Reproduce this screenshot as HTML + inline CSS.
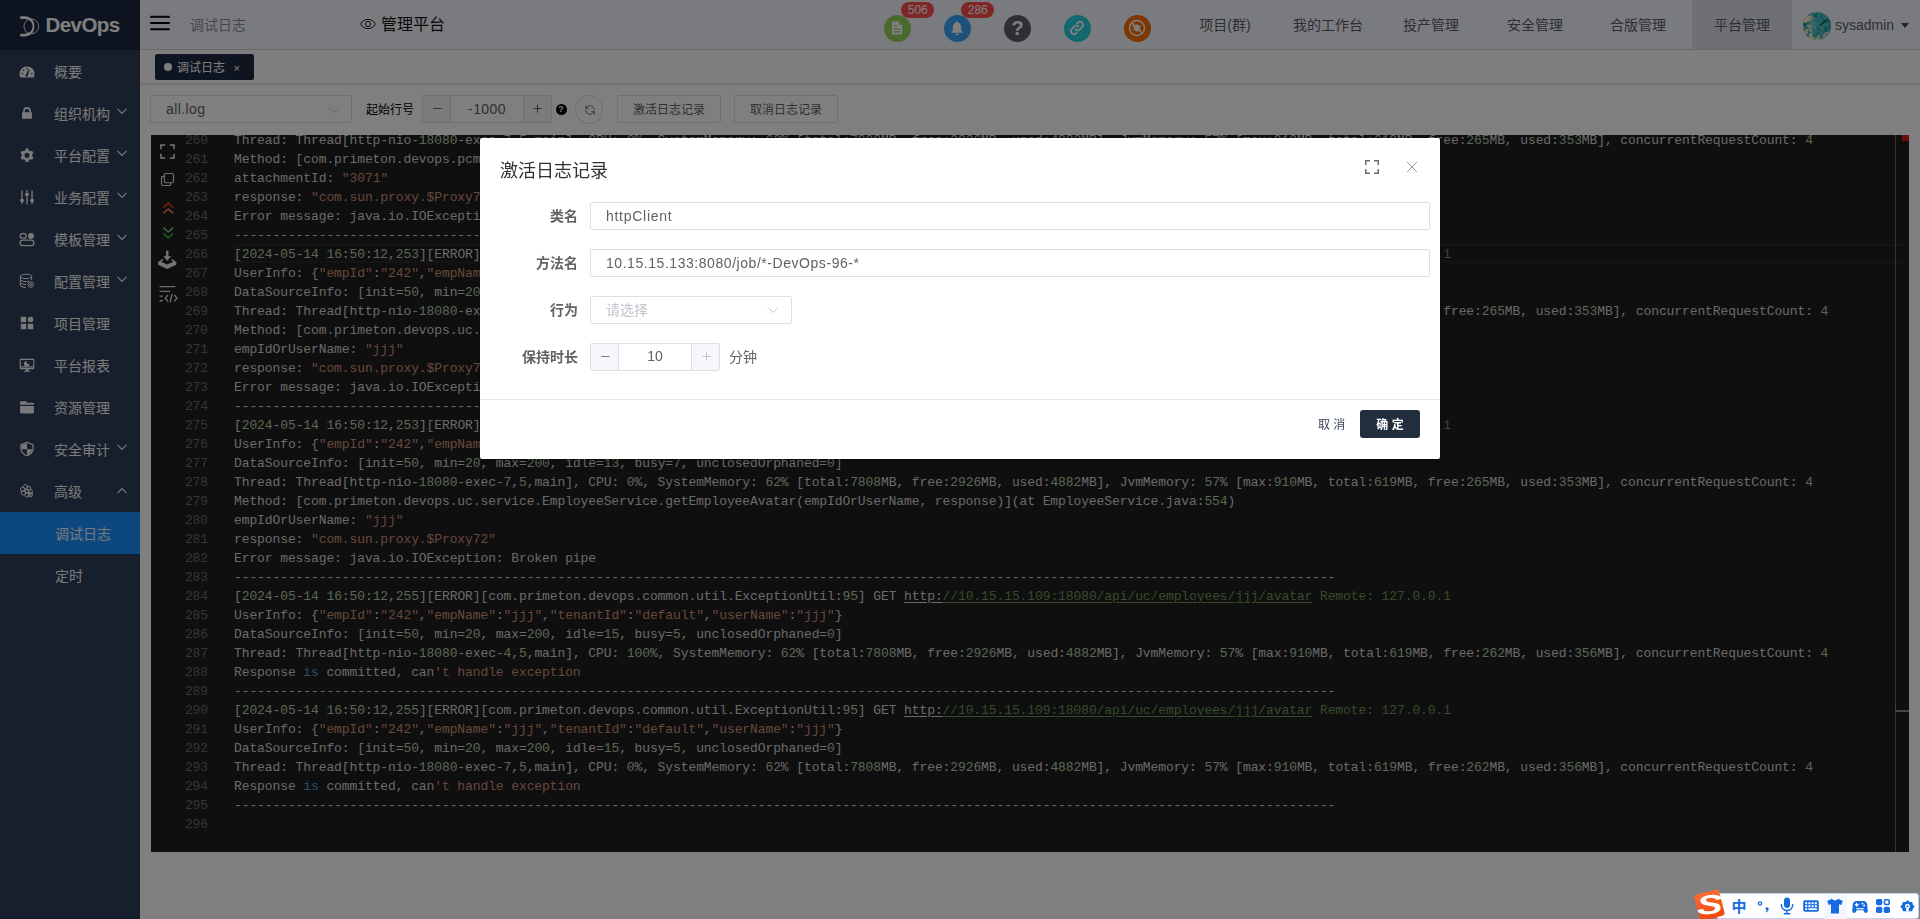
<!DOCTYPE html>
<html lang="zh-CN">
<head>
<meta charset="utf-8">
<title>DevOps - 调试日志</title>
<style>
*{box-sizing:border-box;margin:0;padding:0}
html,body{width:1920px;height:919px;overflow:hidden;background:#fff}
body{font-family:"Liberation Sans","Noto Sans CJK SC",sans-serif;font-size:14px;color:#303133;-webkit-font-smoothing:antialiased}
i{font-style:normal}
ul{list-style:none}
button{font-family:inherit;padding:0;margin:0;white-space:nowrap}
h3{font-weight:normal;margin:0}
a{color:inherit;text-decoration:none}
#app{position:relative;width:1920px;height:919px;overflow:hidden;background:#fff}
.abs{position:absolute}
/* sidebar */
#side{position:absolute;left:0;top:0;width:140px;height:919px;background:#303f58}
#logo{position:absolute;left:0;top:0;width:140px;height:50px;background:#1d293f}
#logo .t{position:absolute;left:45.500px;top:0;line-height:50px;font-size:20.500px;font-weight:bold;color:#fff;letter-spacing:-0.550px}
.mi{position:absolute;left:0;width:140px;height:42px;line-height:42px;color:#f4f4f5;font-size:14px}
.mi .tt{position:absolute;left:54px;top:1px}
.mi svg.ic{position:absolute;left:19px;top:13px;width:16px;height:16px}
.mi svg.ar{position:absolute;left:116px;top:13px;width:12px;height:12px}
.mi.sub .tt{left:55px}
.mi.act{background:#1890ff}
/* header */
#hd{position:absolute;left:140px;top:0;width:1780px;height:50px;background:#f5f7fe;border-bottom:1px solid #dddde0}
.nav{position:absolute;top:0;height:49px;line-height:51px;width:100px;text-align:center;font-size:14px;color:#5a5e66}
.nav.on{background:#dfe1e8}
.cir{position:absolute;top:15px;width:27px;height:27px;border-radius:50%}
.cir svg{position:absolute;left:-1px;top:-1px;width:28px;height:28px}
.bdg{position:absolute;top:2px;width:33px;height:16px;line-height:17.500px;border-radius:8px;background:#ff4d4f;color:#fff;font-size:12px;text-align:center;padding:0 0 0 .500px}
/* tabs */
#tabs{position:absolute;left:140px;top:50px;width:1780px;height:34px;background:#fdfdfd;border-bottom:1px solid #d8dce5;box-shadow:0 1px 3px 0 rgba(0,0,0,.12),0 0 3px 0 rgba(0,0,0,.04)}
#tab{position:absolute;left:15px;top:4px;width:99px;height:26px;border-radius:2px;background:#1e2a40;color:#fff;font-size:12px;line-height:26px}
/* toolbar */
.box{position:absolute;border:1px solid #dcdfe6;border-radius:2px;background:#fff}
.btn{position:absolute;top:95px;height:28px;line-height:28px;border:1px solid #dcdfe6;border-radius:2px;background:#fff;font-size:12px;color:#606266;text-align:center}
/* editor */
#ed{position:absolute;left:151px;top:135px;width:1758px;height:717px;background:#1e1e1e;overflow:hidden;font-family:"Liberation Mono","DejaVu Sans Mono",monospace;font-size:13px;letter-spacing:-0.1px;color:#d4d4d4}
.ln{position:absolute;left:0;height:19px;line-height:19px;white-space:pre;width:1744px}
.ln .no{position:absolute;left:0;width:57px;text-align:right;color:#6c6c6c}
.ln .tx{position:absolute;left:83px}
.ln .n{color:#b5cea8}.ln .s{color:#ce9178}.ln .k{color:#569cd6}.ln .c{color:#6a9955}
.ln u{text-decoration:underline;text-underline-offset:2px}.ln u.c{color:#6a9955}
/* mask + modal */
#mask{position:absolute;left:0;top:0;width:1920px;height:919px;background:rgba(0,0,0,.5)}
#dlg{position:absolute;left:480px;top:138px;width:960px;height:321px;background:#fff;border-radius:2px;box-shadow:0 1px 3px rgba(0,0,0,.3);opacity:.999}
#dlg .ttl{position:absolute;left:20px;top:18.500px;font-size:18px;line-height:28px;color:#303133}
.lab{position:absolute;left:0;width:98px;text-align:right;font-size:14px;font-weight:bold;color:#606266;line-height:28px}
.inp{position:absolute;left:110px;height:28px;border:1px solid #dcdfe6;border-radius:2px;background:transparent;font-size:14px;line-height:26px;color:#606266;padding:0 15px}
</style>
</head>
<body>
<div id="app">
<aside id="side">
  <div id="logo">
    <svg class="abs" style="left:19.500px;top:15.500px;width:20px;height:21px" viewBox="0 0 20 21"><path fill="#fff" d="M0.200 0.300H4.600C9.600 0.300 14.400 3.600 14.400 10.300C14.400 17 9.600 20.400 4.600 20.400H0.200V17.800H3.600C8.600 17.800 12.600 15.300 12.600 10.300C12.600 5.400 8.600 2.900 3.600 2.900H0.200Z"/><circle cx="11.300" cy="10.400" r="7.400" fill="none" stroke="#fff" stroke-width="1" opacity=".9"/></svg>
    <span class="t">DevOps</span>
  </div>
  <nav><ul>
  <li class="mi" style="top:50px"><svg class="ic" style="top:14px" viewBox="0 0 16 16"><path fill="#f4f4f5" d="M8 2.4a7.5 7.5 0 0 0-7.5 7.5c0 1.35.36 2.6.98 3.7h13.04c.62-1.1.98-2.35.98-3.7A7.5 7.5 0 0 0 8 2.4z"/><g fill="#303f58"><circle cx="3.2" cy="9.6" r=".8"/><circle cx="4.6" cy="6.2" r=".8"/><circle cx="8" cy="4.7" r=".8"/><circle cx="12.8" cy="9.6" r=".8"/><path d="M7.1 10.2l2.7-5 .9.4-1.7 5.3a1.3 1.3 0 1 1-1.9-.7z"/></g></svg><span class="tt">概要</span></li>
  <li class="mi" style="top:92px"><svg class="ic" style="left:20px;top:14px;width:14px;height:14px" viewBox="0 0 16 16"><path fill="#f4f4f5" d="M3.6 7V5.6a4.4 4.4 0 0 1 8.8 0V7h.4c.5 0 .9.4.9.9v5.7c0 .5-.4.9-.9.9H3.200c-.5 0-.9-.4-.9-.9V7.900c0-.5.4-.9.9-.9h.4zm1.8 0h5.200V5.600a2.6 2.6 0 0 0-5.2 0V7z"/></svg><span class="tt">组织机构</span><svg class="ar" viewBox="0 0 12 12"><path d="M1.5 3.8 6 8.300l4.5-4.5" fill="none" stroke="#f4f4f5" stroke-width="1.2"/></svg></li>
  <li class="mi" style="top:134px"><svg class="ic" viewBox="0 0 16 16"><path fill="#f4f4f5" fill-rule="evenodd" d="M6.6 1.600h2.800l.5 1.9 1.3.75 1.9-.55 1.4 2.4-1.4 1.400v1.500l1.4 1.4-1.4 2.4-1.9-.55-1.3.75-.5 1.900H6.600l-.5-1.9-1.3-.75-1.9.55-1.4-2.400L2.9 9V7.500L1.5 6.100l1.4-2.4 1.9.55 1.3-.75.5-1.900zM8 5.700a2.550 2.550 0 1 0 0 5.1 2.550 2.550 0 0 0 0-5.100z"/></svg><span class="tt">平台配置</span><svg class="ar" viewBox="0 0 12 12"><path d="M1.5 3.8 6 8.300l4.5-4.5" fill="none" stroke="#f4f4f5" stroke-width="1.2"/></svg></li>
  <li class="mi" style="top:176px"><svg class="ic" viewBox="0 0 16 16"><g fill="#f4f4f5"><rect x="2.3" y="1.5" width="1.3" height="8"/><circle cx="2.950" cy="11.3" r="1.9"/><rect x="2.3" y="13" width="1.3" height="2"/><rect x="7.350" y="7.5" width="1.3" height="8"/><circle cx="8" cy="5.4" r="1.9"/><rect x="7.350" y="1" width="1.3" height="2.5"/><rect x="12.4" y="1.5" width="1.3" height="8"/><circle cx="13.050" cy="11.3" r="1.9"/><rect x="12.4" y="13" width="1.3" height="2"/></g></svg><span class="tt">业务配置</span><svg class="ar" viewBox="0 0 12 12"><path d="M1.5 3.8 6 8.300l4.5-4.5" fill="none" stroke="#f4f4f5" stroke-width="1.2"/></svg></li>
  <li class="mi" style="top:218px"><svg class="ic" viewBox="0 0 16 16"><g fill="none" stroke="#f4f4f5" stroke-width="1.2"><rect x="1.1" y="2.6" width="6.2" height="4.6" rx="2.3"/><rect x="1.1" y="9.2" width="13.8" height="5.4" rx="2.7"/></g><circle cx="12" cy="4.9" r="2.9" fill="#f4f4f5"/></svg><span class="tt">模板管理</span><svg class="ar" viewBox="0 0 12 12"><path d="M1.5 3.8 6 8.300l4.5-4.5" fill="none" stroke="#f4f4f5" stroke-width="1.2"/></svg></li>
  <li class="mi" style="top:260px"><svg class="ic" viewBox="0 0 16 16"><g fill="none" stroke="#f4f4f5" stroke-width="1"><ellipse cx="7" cy="3.4" rx="5.6" ry="2.2"/><path d="M1.4 3.400v8.800c0 1.2 2.5 2.2 5.6 2.200M12.6 3.400v3.800M1.4 6.400c0 1.2 2.5 2.2 5.6 2.2 1.2 0 2.3-.15 3.2-.4M1.4 9.300c0 1.2 2.5 2.2 5.6 2.2"/><circle cx="11.8" cy="11.6" r="2.7"/><circle cx="11.8" cy="11.6" r="1"/></g></svg><span class="tt">配置管理</span><svg class="ar" viewBox="0 0 12 12"><path d="M1.5 3.8 6 8.300l4.5-4.5" fill="none" stroke="#f4f4f5" stroke-width="1.2"/></svg></li>
  <li class="mi" style="top:302px"><svg class="ic" viewBox="0 0 16 16"><g fill="#f4f4f5"><rect x="1.8" y="1.8" width="5.4" height="5.4"/><circle cx="11.5" cy="4.5" r="2.8"/><rect x="1.8" y="8.8" width="5.4" height="5.4"/><rect x="8.8" y="8.8" width="5.4" height="5.4"/></g></svg><span class="tt">项目管理</span></li>
  <li class="mi" style="top:344px"><svg class="ic" viewBox="0 0 16 16"><g fill="none" stroke="#f4f4f5" stroke-width="1.1"><rect x="1.2" y="2.4" width="13.6" height="9.2" rx=".6"/><path d="M1.2 9.900h13.600M5 14.200h6" /></g><path fill="#f4f4f5" d="M7.7 4.100v2.700h2.700a2.7 2.7 0 1 1-2.7-2.700zM6.8 11.600h2.400v2.300H6.800z"/></svg><span class="tt">平台报表</span></li>
  <li class="mi" style="top:386px"><svg class="ic" viewBox="0 0 16 16"><path fill="#f4f4f5" d="M1.1 3.300c0-.6.5-1.1 1.1-1.100h4.700l1.5 1.500h5.400c.6 0 1.1.5 1.1 1.100v1H1.100V3.300zM1.1 7h13.800v6.300c0 .6-.5 1.1-1.1 1.100H2.200c-.6 0-1.1-.5-1.1-1.100V7z"/></svg><span class="tt">资源管理</span></li>
  <li class="mi" style="top:428px"><svg class="ic" viewBox="0 0 16 16"><path fill="none" stroke="#f4f4f5" stroke-width="1.2" d="M8 1.4 14 3.600v4.100c0 3.3-2.3 5.7-6 7.1-3.7-1.4-6-3.8-6-7.100V3.600L8 1.400z"/><path fill="#f4f4f5" d="M8 2.400v5.800H2.400V4.200L8 2.400zM8 8.200h5.400c-.3 2.6-2.3 4.5-5.4 5.700V8.200z"/></svg><span class="tt">安全审计</span><svg class="ar" viewBox="0 0 12 12"><path d="M1.5 3.8 6 8.300l4.5-4.5" fill="none" stroke="#f4f4f5" stroke-width="1.2"/></svg></li>
  <li class="mi" style="top:470px"><svg class="ic" viewBox="0 0 16 16"><g fill="none" stroke="#f4f4f5" stroke-width="1"><circle cx="6.6" cy="3.8" r="2.1"/><circle cx="3.6" cy="6.3" r="2.1"/><circle cx="4.3" cy="9.9" r="2.1"/><circle cx="9.7" cy="5.3" r="2.1"/><circle cx="8" cy="8" r="1.8"/><circle cx="11.4" cy="8.6" r="2.1"/><circle cx="8" cy="12" r="2.1"/><circle cx="11.3" cy="11.6" r="2.3"/><circle cx="11.3" cy="11.6" r=".9"/></g></svg><span class="tt">高级</span><svg class="ar" style="top:15px" viewBox="0 0 12 12"><path d="M1.5 8.2 6 3.700l4.5 4.5" fill="none" stroke="#f4f4f5" stroke-width="1.2"/></svg></li>
  <li class="mi sub act" style="top:512px"><span class="tt">调试日志</span></li>
  <li class="mi sub" style="top:554px"><span class="tt">定时</span></li>
</ul></nav></aside>

<header id="hd">
  <svg class="abs" style="left:10px;top:15px;width:20px;height:16px" viewBox="0 0 20 16"><g fill="#000"><rect x="0" y="0.7" width="20" height="2" rx="1"/><rect x="0" y="7" width="20" height="2" rx="1"/><rect x="0" y="13.300" width="20" height="2" rx="1"/></g></svg>
  <span class="abs" style="left:50px;top:0;line-height:50px;font-size:14px;color:#8a8f9a">调试日志</span>
  <svg class="abs" style="left:220px;top:17px;width:16px;height:14px" viewBox="0 0 16 14"><g fill="none" stroke="#222" stroke-width="1"><path d="M.6 7C2.300 3.900 5 2.300 8 2.300S13.700 3.900 15.400 7C13.700 10.100 11 11.700 8 11.700S2.300 10.100.6 7z"/><circle cx="8" cy="7" r="2.600"/></g></svg>
  <span class="abs" style="left:241px;top:0;line-height:49px;font-size:16px;color:#111">管理平台</span>

  <div class="cir" style="left:744px;background:#95d45a"><svg viewBox="0 0 28 28"><path fill="#fff" d="M9 7.500h7l3.200 3.200v9.800H9z"/><path fill="#95d45a" d="M16 7.500v3.200h3.200zM10.800 11.500h3.600v1.300h-3.600zM10.800 14.400h6.600v1.300h-6.600zM10.800 17.200h6.600v1.300h-6.600z"/></svg></div>
  <div class="bdg" style="left:761px">506</div>
  <div class="cir" style="left:804px;background:#3aa4f8"><svg viewBox="0 0 28 28"><path fill="#fff" d="M14 7.200c.6 0 1 .4 1 1v.3c1.900.5 3.100 2.100 3.100 4.200v3.300l1.500 2.100v.6H8.400v-.6l1.500-2.100v-3.300c0-2.100 1.200-3.700 3.100-4.200v-.3c0-.6.4-1 1-1zM12.400 19.600h3.200c0 .9-.7 1.500-1.600 1.500s-1.600-.6-1.600-1.500z"/></svg></div>
  <div class="bdg" style="left:821px">286</div>
  <div class="cir" style="left:864px;background:#5a5e66"><span class="abs" style="left:0;top:0;width:27px;line-height:27px;text-align:center;font-size:20px;font-weight:bold;color:#fff">?</span></div>
  <div class="cir" style="left:924px;background:#26cfdc"><svg viewBox="0 0 28 28"><g fill="none" stroke="#fff" stroke-width="1.800" stroke-linecap="round"><path d="M12.700 15.300a3 3 0 0 0 4.200 0l2.600-2.600a3 3 0 0 0-4.200-4.200l-1 1"/><path d="M15.300 12.700a3 3 0 0 0-4.200 0l-2.600 2.600a3 3 0 0 0 4.200 4.200l1-1"/></g></svg></div>
  <div class="cir" style="left:984px;background:#fa6e04"><svg viewBox="0 0 28 28"><g fill="none" stroke="#fff" stroke-width="1.400"><circle cx="14" cy="14" r="7.500"/><path d="M8.700 8.700l10.600 10.600"/></g><path fill="#fff" d="M14 10.600c1.700 0 2.800 1.500 2.800 3.500s-1.100 3.500-2.800 3.500-2.800-1.500-2.800-3.500 1.100-3.500 2.800-3.500z"/><g stroke="#fff" stroke-width="1" fill="none"><path d="M9.800 12.300h2M9.800 15.800h2M16.200 12.300h2M16.200 15.800h2"/></g></svg></div>

  <nav>
  <a class="nav" style="left:1035px">项目(群)</a>
  <a class="nav" style="left:1138px">我的工作台</a>
  <a class="nav" style="left:1241px">投产管理</a>
  <a class="nav" style="left:1345px">安全管理</a>
  <a class="nav" style="left:1448px">合版管理</a>
  <a class="nav on" style="left:1552px">平台管理</a>
  </nav>

  <svg class="abs" style="left:1663px;top:12px;width:28px;height:28px" viewBox="0 0 28 28"><defs><radialGradient id="av" cx="58%" cy="45%" r="60%"><stop offset="0" stop-color="#3cd6da"/><stop offset=".7" stop-color="#30bcc8"/><stop offset="1" stop-color="#2496a8"/></radialGradient><radialGradient id="avg" cx="66%" cy="42%" r="62%"><stop offset=".3" stop-color="#000"/><stop offset=".62" stop-color="#aaa"/><stop offset=".85" stop-color="#fff"/></radialGradient><mask id="avm"><rect width="28" height="28" fill="url(#avg)"/><rect x="13" y="0" width="15" height="20" fill="#000" opacity=".8"/></mask><filter id="avf" x="0" y="0" width="1" height="1" color-interpolation-filters="sRGB"><feTurbulence type="fractalNoise" baseFrequency=".2" numOctaves="3" seed="11"/><feColorMatrix type="matrix" values="0 0 0 0 1  0 0 0 0 .94  0 0 0 0 .8  5 0 0 0 -1.850"/></filter><filter id="avd" x="0" y="0" width="1" height="1" color-interpolation-filters="sRGB"><feTurbulence type="fractalNoise" baseFrequency=".28" numOctaves="2" seed="5"/><feColorMatrix type="matrix" values="0 0 0 0 .05  0 0 0 0 .32  0 0 0 0 .38  0 1.800 0 0 -.850"/></filter><clipPath id="avc"><circle cx="14" cy="14" r="14"/></clipPath></defs><g clip-path="url(#avc)"><rect width="28" height="28" fill="url(#av)"/><rect width="28" height="28" filter="url(#avd)"/><rect width="28" height="28" filter="url(#avf)" mask="url(#avm)"/><path d="M16.500 12.600c3-2 5-4.600 8-5.600l.8 1.500c-3 1-5 3.600-8 5.600z" fill="#24484c" opacity=".85"/><circle cx="16.500" cy="8.700" r=".8" fill="#ff7a30"/><circle cx="19.700" cy="14.600" r=".7" fill="#f0a040"/><circle cx="11.500" cy="14" r=".8" fill="#e8a860"/><circle cx="14.800" cy="19.800" r=".9" fill="#ff5a20"/><circle cx="20.500" cy="17.800" r=".7" fill="#e8a050"/><circle cx="17.300" cy="17.800" r=".6" fill="#d08040"/><circle cx="23.600" cy="22.600" r=".7" fill="#c06030"/></g></svg>
  <span class="abs" style="left:1695px;top:1px;line-height:49px;font-size:14px;color:#5a5e66">sysadmin</span>
  <svg class="abs" style="left:1761px;top:23px;width:8px;height:5px" viewBox="0 0 10 6"><path d="M0 0h10L5 6z" fill="#45484d"/></svg>
</header>

<div id="tabs">
  <div id="tab"><i class="abs" style="left:9px;top:9px;width:8px;height:8px;border-radius:50%;background:#fff"></i><span class="abs" style="left:22px;top:1px">调试日志</span><span class="abs" style="left:78.500px;top:1px;font-size:11px">×</span></div>
</div>

<section id="tool">
<div class="box" style="left:150px;top:95px;width:202px;height:28px"><span class="abs" style="left:15px;top:0;line-height:26px;font-size:14px;color:#606266;letter-spacing:.42px">all.log</span><svg class="abs" style="left:177px;top:8px;width:12px;height:12px" viewBox="0 0 12 12"><path d="M1 3.500 6 8.500l5-5" fill="none" stroke="#c0c4cc" stroke-width="1"/></svg></div>
<label class="abs" style="left:366px;top:96px;line-height:28px;font-size:12px;color:#000">起始行号</label>
<div class="box" style="left:422px;top:95px;width:130px;height:28px;overflow:hidden"><span class="abs" style="left:0;top:0;width:28px;height:26px;background:#f5f7fa;border-right:1px solid #dcdfe6"></span><svg class="abs" style="left:9.5px;top:8px;width:9px;height:9px" viewBox="0 0 9 9"><path d="M0.400 4.500h8.200" stroke="#606266" stroke-width="1" fill="none"/></svg><span class="abs" style="left:28px;top:0;width:72px;text-align:center;line-height:26px;font-size:14px;color:#606266;letter-spacing:0.4px">-1000</span><span class="abs" style="left:100px;top:0;width:28px;height:26px;background:#f5f7fa;border-left:1px solid #dcdfe6"></span><svg class="abs" style="left:110px;top:8px;width:9px;height:9px" viewBox="0 0 9 9"><path d="M0.400 4.500h8.200M4.500 0.400v8.200" stroke="#606266" stroke-width="1" fill="none"/></svg></div>
<div class="abs" style="left:555.500px;top:104px;width:11px;height:11px;border-radius:50%;background:#000;color:#fff;font-size:9px;font-weight:bold;line-height:11px;text-align:center">?</div>
<div class="box" style="left:575px;top:95px;width:28px;height:29px;border-radius:50%"><svg class="abs" style="left:7.600px;top:7.500px;width:12px;height:12px" viewBox="0 0 12 12"><g fill="none" stroke="#74777d" stroke-width="1"><path d="M2.100 4.200A4.300 4.300 0 0 1 10.300 6M9.900 7.800A4.300 4.300 0 0 1 1.700 6"/><path d="M1.700 1.400v3h3M10.300 10.600v-3h-3"/></g></svg></div>
<button type="button" class="btn" style="left:617px;width:104px">激活日志记录</button>
<button type="button" class="btn" style="left:734px;width:104px">取消日志记录</button>
</section>

<main id="ed">
<div class="ln" style="top:-4px"><span class="no">260</span><span class="tx">Thread: Thread[http-nio-<i class="n">18080</i>-exec-<i class="n">7</i>,<i class="n">5</i>,main], CPU: <i class="n">0</i>%, SystemMemory: <i class="n">62</i>% [total:<i class="n">7808</i>MB, free:<i class="n">2926</i>MB, used:<i class="n">4882</i>MB], JvmMemory: <i class="n">57</i>% [max:<i class="n">910</i>MB, total:<i class="n">619</i>MB, free:<i class="n">265</i>MB, used:<i class="n">353</i>MB], concurrentRequestCount: <i class="n">4</i></span></div>
<div class="ln" style="top:15px"><span class="no">261</span><span class="tx">Method: [com.primeton.devops.pcm.service.AttachmentService.download(attachmentId, response)](at AttachmentService.java:<i class="n">118</i>)</span></div>
<div class="ln" style="top:34px"><span class="no">262</span><span class="tx">attachmentId: <i class="s">"3071"</i></span></div>
<div class="ln" style="top:53px"><span class="no">263</span><span class="tx">response: <i class="s">"com.sun.proxy.$Proxy72"</i></span></div>
<div class="ln" style="top:72px"><span class="no">264</span><span class="tx">Error message: java.io.IOException: Broken pipe</span></div>
<div class="ln" style="top:91px"><span class="no">265</span><span class="tx">-----------------------------------------------------------------------------------------------------------------------------------------------</span></div>
<div class="ln" style="top:110px"><span class="no">266</span><span class="tx">[<i class="n">2024</i>-<i class="n">05</i>-<i class="n">14</i> <i class="n">16</i>:<i class="n">50</i>:<i class="n">12</i>,<i class="n">253</i>][ERROR][com.primeton.devops.common.util.ExceptionUtil:<i class="n">95</i>] GET <u>http:</u><u class="c">//10.15.15.109:18080/api/uc/employees/jjj/avatar</u><i class="c"> Remote: 127.0.0.1</i></span></div>
<div class="ln" style="top:129px"><span class="no">267</span><span class="tx">UserInfo: {<i class="s">"empId"</i>:<i class="s">"242"</i>,<i class="s">"empName"</i>:<i class="s">"jjj"</i>,<i class="s">"tenantId"</i>:<i class="s">"default"</i>,<i class="s">"userName"</i>:<i class="s">"jjj"</i>}</span></div>
<div class="ln" style="top:148px"><span class="no">268</span><span class="tx">DataSourceInfo: [init=<i class="n">50</i>, min=<i class="n">20</i>, max=<i class="n">200</i>, idle=<i class="n">13</i>, busy=<i class="n">7</i>, unclosedOrphaned=<i class="n">0</i>]</span></div>
<div class="ln" style="top:167px"><span class="no">269</span><span class="tx">Thread: Thread[http-nio-<i class="n">18080</i>-exec-<i class="n">4</i>,<i class="n">5</i>,main], CPU: <i class="n">100</i>%, SystemMemory: <i class="n">62</i>% [total:<i class="n">7808</i>MB, free:<i class="n">2926</i>MB, used:<i class="n">4882</i>MB], JvmMemory: <i class="n">57</i>% [max:<i class="n">910</i>MB, total:<i class="n">619</i>MB, free:<i class="n">265</i>MB, used:<i class="n">353</i>MB], concurrentRequestCount: <i class="n">4</i></span></div>
<div class="ln" style="top:186px"><span class="no">270</span><span class="tx">Method: [com.primeton.devops.uc.service.EmployeeService.getEmployeeAvatar(empIdOrUserName, response)](at EmployeeService.java:<i class="n">554</i>)</span></div>
<div class="ln" style="top:205px"><span class="no">271</span><span class="tx">empIdOrUserName: <i class="s">"jjj"</i></span></div>
<div class="ln" style="top:224px"><span class="no">272</span><span class="tx">response: <i class="s">"com.sun.proxy.$Proxy72"</i></span></div>
<div class="ln" style="top:243px"><span class="no">273</span><span class="tx">Error message: java.io.IOException: Broken pipe</span></div>
<div class="ln" style="top:262px"><span class="no">274</span><span class="tx">-----------------------------------------------------------------------------------------------------------------------------------------------</span></div>
<div class="ln" style="top:281px"><span class="no">275</span><span class="tx">[<i class="n">2024</i>-<i class="n">05</i>-<i class="n">14</i> <i class="n">16</i>:<i class="n">50</i>:<i class="n">12</i>,<i class="n">253</i>][ERROR][com.primeton.devops.common.util.ExceptionUtil:<i class="n">95</i>] GET <u>http:</u><u class="c">//10.15.15.109:18080/api/uc/employees/jjj/avatar</u><i class="c"> Remote: 127.0.0.1</i></span></div>
<div class="ln" style="top:300px"><span class="no">276</span><span class="tx">UserInfo: {<i class="s">"empId"</i>:<i class="s">"242"</i>,<i class="s">"empName"</i>:<i class="s">"jjj"</i>,<i class="s">"tenantId"</i>:<i class="s">"default"</i>,<i class="s">"userName"</i>:<i class="s">"jjj"</i>}</span></div>
<div class="ln" style="top:319px"><span class="no">277</span><span class="tx">DataSourceInfo: [init=<i class="n">50</i>, min=<i class="n">20</i>, max=<i class="n">200</i>, idle=<i class="n">13</i>, busy=<i class="n">7</i>, unclosedOrphaned=<i class="n">0</i>]</span></div>
<div class="ln" style="top:338px"><span class="no">278</span><span class="tx">Thread: Thread[http-nio-<i class="n">18080</i>-exec-<i class="n">7</i>,<i class="n">5</i>,main], CPU: <i class="n">0</i>%, SystemMemory: <i class="n">62</i>% [total:<i class="n">7808</i>MB, free:<i class="n">2926</i>MB, used:<i class="n">4882</i>MB], JvmMemory: <i class="n">57</i>% [max:<i class="n">910</i>MB, total:<i class="n">619</i>MB, free:<i class="n">265</i>MB, used:<i class="n">353</i>MB], concurrentRequestCount: <i class="n">4</i></span></div>
<div class="ln" style="top:357px"><span class="no">279</span><span class="tx">Method: [com.primeton.devops.uc.service.EmployeeService.getEmployeeAvatar(empIdOrUserName, response)](at EmployeeService.java:<i class="n">554</i>)</span></div>
<div class="ln" style="top:376px"><span class="no">280</span><span class="tx">empIdOrUserName: <i class="s">"jjj"</i></span></div>
<div class="ln" style="top:395px"><span class="no">281</span><span class="tx">response: <i class="s">"com.sun.proxy.$Proxy72"</i></span></div>
<div class="ln" style="top:414px"><span class="no">282</span><span class="tx">Error message: java.io.IOException: Broken pipe</span></div>
<div class="ln" style="top:433px"><span class="no">283</span><span class="tx">-----------------------------------------------------------------------------------------------------------------------------------------------</span></div>
<div class="ln" style="top:452px"><span class="no">284</span><span class="tx">[<i class="n">2024</i>-<i class="n">05</i>-<i class="n">14</i> <i class="n">16</i>:<i class="n">50</i>:<i class="n">12</i>,<i class="n">255</i>][ERROR][com.primeton.devops.common.util.ExceptionUtil:<i class="n">95</i>] GET <u>http:</u><u class="c">//10.15.15.109:18080/api/uc/employees/jjj/avatar</u><i class="c"> Remote: 127.0.0.1</i></span></div>
<div class="ln" style="top:471px"><span class="no">285</span><span class="tx">UserInfo: {<i class="s">"empId"</i>:<i class="s">"242"</i>,<i class="s">"empName"</i>:<i class="s">"jjj"</i>,<i class="s">"tenantId"</i>:<i class="s">"default"</i>,<i class="s">"userName"</i>:<i class="s">"jjj"</i>}</span></div>
<div class="ln" style="top:490px"><span class="no">286</span><span class="tx">DataSourceInfo: [init=<i class="n">50</i>, min=<i class="n">20</i>, max=<i class="n">200</i>, idle=<i class="n">15</i>, busy=<i class="n">5</i>, unclosedOrphaned=<i class="n">0</i>]</span></div>
<div class="ln" style="top:509px"><span class="no">287</span><span class="tx">Thread: Thread[http-nio-<i class="n">18080</i>-exec-<i class="n">4</i>,<i class="n">5</i>,main], CPU: <i class="n">100</i>%, SystemMemory: <i class="n">62</i>% [total:<i class="n">7808</i>MB, free:<i class="n">2926</i>MB, used:<i class="n">4882</i>MB], JvmMemory: <i class="n">57</i>% [max:<i class="n">910</i>MB, total:<i class="n">619</i>MB, free:<i class="n">262</i>MB, used:<i class="n">356</i>MB], concurrentRequestCount: <i class="n">4</i></span></div>
<div class="ln" style="top:528px"><span class="no">288</span><span class="tx">Response <i class="k">is</i> committed, can<i class="s">'t handle exception</i></span></div>
<div class="ln" style="top:547px"><span class="no">289</span><span class="tx">-----------------------------------------------------------------------------------------------------------------------------------------------</span></div>
<div class="ln" style="top:566px"><span class="no">290</span><span class="tx">[<i class="n">2024</i>-<i class="n">05</i>-<i class="n">14</i> <i class="n">16</i>:<i class="n">50</i>:<i class="n">12</i>,<i class="n">255</i>][ERROR][com.primeton.devops.common.util.ExceptionUtil:<i class="n">95</i>] GET <u>http:</u><u class="c">//10.15.15.109:18080/api/uc/employees/jjj/avatar</u><i class="c"> Remote: 127.0.0.1</i></span></div>
<div class="ln" style="top:585px"><span class="no">291</span><span class="tx">UserInfo: {<i class="s">"empId"</i>:<i class="s">"242"</i>,<i class="s">"empName"</i>:<i class="s">"jjj"</i>,<i class="s">"tenantId"</i>:<i class="s">"default"</i>,<i class="s">"userName"</i>:<i class="s">"jjj"</i>}</span></div>
<div class="ln" style="top:604px"><span class="no">292</span><span class="tx">DataSourceInfo: [init=<i class="n">50</i>, min=<i class="n">20</i>, max=<i class="n">200</i>, idle=<i class="n">15</i>, busy=<i class="n">5</i>, unclosedOrphaned=<i class="n">0</i>]</span></div>
<div class="ln" style="top:623px"><span class="no">293</span><span class="tx">Thread: Thread[http-nio-<i class="n">18080</i>-exec-<i class="n">7</i>,<i class="n">5</i>,main], CPU: <i class="n">0</i>%, SystemMemory: <i class="n">62</i>% [total:<i class="n">7808</i>MB, free:<i class="n">2926</i>MB, used:<i class="n">4882</i>MB], JvmMemory: <i class="n">57</i>% [max:<i class="n">910</i>MB, total:<i class="n">619</i>MB, free:<i class="n">262</i>MB, used:<i class="n">356</i>MB], concurrentRequestCount: <i class="n">4</i></span></div>
<div class="ln" style="top:642px"><span class="no">294</span><span class="tx">Response <i class="k">is</i> committed, can<i class="s">'t handle exception</i></span></div>
<div class="ln" style="top:661px"><span class="no">295</span><span class="tx">-----------------------------------------------------------------------------------------------------------------------------------------------</span></div>
<div class="ln" style="top:680px"><span class="no">296</span><span class="tx"></span></div>
<div class="abs" style="left:83px;top:109px;width:1680px;height:19px;border:2px solid #282828"></div>
<svg class="abs" style="left:9px;top:9px;width:15px;height:15px" viewBox="0 0 16 16"><path d="M1 5.500V1h4.500M10.500 1H15v4.500M15 10.500V15h-4.500M5.500 15H1v-4.500" fill="none" stroke="#f0f0f0" stroke-width="1.600"/></svg>
<svg class="abs" style="left:8.500px;top:36.500px;width:15px;height:15px" viewBox="0 0 16 16"><g fill="none" stroke="#e0e0e0" stroke-width="1.200"><rect x="4.600" y="1.600" width="9.800" height="9.800" rx="1.500"/><path d="M4.600 4.600H3.100c-.8 0-1.500.7-1.500 1.500v6.800c0 .8.700 1.500 1.500 1.500h6.800c.8 0 1.500-.7 1.500-1.500v-1.500"/></g></svg>
<svg class="abs" style="left:10.500px;top:65.500px;width:12.500px;height:15px" viewBox="0 0 14 16"><path d="M1.500 7 7 2l5.500 5" fill="none" stroke="#e8401c" stroke-width="1.700"/><path d="M1.500 13.500 7 8.500l5.500 5" fill="none" stroke="#f4815a" stroke-width="1.700"/></svg>
<svg class="abs" style="left:10.500px;top:90px;width:12.500px;height:15px" viewBox="0 0 14 16"><path d="M1.500 2.500 7 7.500l5.500-5" fill="none" stroke="#7ecb8f" stroke-width="1.700"/><path d="M1.500 9 7 14l5.500-5" fill="none" stroke="#3fae46" stroke-width="1.700"/></svg>
<svg class="abs" style="left:5.500px;top:115px;width:20.500px;height:20px" viewBox="0 0 22 22"><g fill="#e8e8e8"><path d="M9.700 0.500h2.600v6.500h3L11 11.800 6.700 7h3z"/><path d="M1 13.200 5.500 10l1.300 1L4.200 13 11 16l6.800-3-2.600-2 1.300-1 4.500 3.200v3L11 21 1 16.200z"/></g></svg>
<svg class="abs" style="left:7px;top:148.500px;width:22px;height:21px" viewBox="0 0 20 20"><g fill="none" stroke="#dcdcdc" stroke-width="1.300"><path d="M1 2.500h15M1 7h10M1 11.500h3M1 16h3"/><path d="M9 10.500 6.500 13.500 9 16.500M15 10.500l2.500 3L15 16.500M13 9.500l-2 8"/></g></svg>
<div class="abs" style="left:1744px;top:0;width:1px;height:717px;background:#6e6e6e"></div>
<div class="abs" style="left:1744px;top:575px;width:14px;height:2px;background:#8a8a8a"></div>
<div class="abs" style="left:1751px;top:0;width:7px;height:6px;background:#e01818"></div>

</main>
<div id="mask"></div>
<div id="dlg" role="dialog" aria-modal="true" aria-label="激活日志记录">
  <h3 class="ttl">激活日志记录</h3>
  <svg class="abs" style="left:884px;top:21px;width:16px;height:16px" viewBox="0 0 16 16"><path d="M1.750 6V1.750H6M10 1.750h4.250V6M14.250 10v4.250H10M6 14.250H1.750V10" fill="none" stroke="#6e6e6e" stroke-width="1.500"/></svg>
  <svg class="abs" style="left:926px;top:23px;width:12px;height:12px" viewBox="0 0 12 12"><path d="M1.200 1.200l9.600 9.600M10.800 1.200l-9.600 9.600" fill="none" stroke="#909399" stroke-width="1"/></svg>
  <label class="lab" style="top:64px">类名</label>
  <div class="inp" style="top:64px;width:840px;letter-spacing:.72px">httpClient</div>
  <label class="lab" style="top:111px">方法名</label>
  <div class="inp" style="top:111px;width:840px;letter-spacing:.55px">10.15.15.133:8080/job/*-DevOps-96-*</div>
  <label class="lab" style="top:158px">行为</label>
  <div class="inp" style="top:158px;width:202px;color:#c0c4cc">请选择<svg class="abs" style="left:176px;top:7px;width:12px;height:12px" viewBox="0 0 12 12"><path d="M1 3.500 6 8.500l5-5" fill="none" stroke="#c0c4cc" stroke-width="1"/></svg></div>
  <label class="lab" style="top:205px">保持时长</label>
  <div class="inp" style="top:205px;width:130px;padding:0;overflow:hidden"><span class="abs" style="left:0;top:0;width:28px;height:26px;background:#f5f7fa;border-right:1px solid #dcdfe6"></span><svg class="abs" style="left:9.500px;top:8px;width:9px;height:9px" viewBox="0 0 9 9"><path d="M0.400 4.500h8.200" stroke="#7b7e85" stroke-width="1" fill="none"/></svg><span class="abs" style="left:28px;top:0;width:72px;text-align:center;line-height:24.500px;font-size:14px;color:#606266;letter-spacing:0px">10</span><span class="abs" style="left:100px;top:0;width:28px;height:26px;background:#f5f7fa;border-left:1px solid #dcdfe6"></span><svg class="abs" style="left:111px;top:8px;width:9px;height:9px" viewBox="0 0 9 9"><path d="M0.400 4.500h8.200M4.500 0.400v8.200" stroke="#c0c4cc" stroke-width="1" fill="none"/></svg></div>
  <span class="abs" style="left:249px;top:205px;line-height:28px;font-size:14px;color:#606266">分钟</span>
  <div class="abs" style="left:0;top:261px;width:960px;height:1px;background:#e4e7ed"></div>
  <button type="button" class="abs" style="left:838px;top:273px;line-height:28px;font-size:12px;color:#3a4557;background:none;border:0">取 消</button>
  <button type="button" class="abs" style="left:880px;top:272px;width:60px;height:28px;border-radius:3px;background:rgba(31,45,61,.996);color:#fff;font-size:12px;font-weight:bold;line-height:30px;text-align:center;border:0">确 定</button>
</div>

<div class="abs" style="left:1716px;top:893px;width:203px;height:26px;background:#fff;border:1px solid #c0d4f0;border-radius:3px"></div>
<svg class="abs" style="left:1690px;top:886px;width:40px;height:36px" viewBox="0 0 40 36"><defs><linearGradient id="sg" x1="0" y1="0" x2="0" y2="1"><stop offset="0" stop-color="#ff6a33"/><stop offset="1" stop-color="#f0470c"/></linearGradient></defs><rect x="0" y="0" width="25.500" height="27" rx="3" fill="url(#sg)" transform="translate(3.700 9.300) rotate(-14.600)"/><text x="0" y="0" font-family="Liberation Sans,sans-serif" font-weight="bold" font-style="italic" font-size="27" fill="#fff" text-anchor="middle" transform="translate(20.300 27.800) rotate(-4) scale(1.420 1)">S</text></svg>
<span class="abs" style="left:1730px;top:895.500px;width:18px;line-height:22px;font-size:15px;font-weight:bold;color:#166be0;text-align:center">中</span>
<svg class="abs" style="left:1755px;top:898px;width:18px;height:18px" viewBox="0 0 18 18"><circle cx="5" cy="5.500" r="1.600" fill="none" stroke="#166be0" stroke-width="1.300"/><path d="M11.800 9.200c1.200 0 1.900.8 1.900 1.900 0 1.500-1.100 2.900-2.800 3.500l-.4-.8c.8-.4 1.400-1 1.500-1.700-.9 0-1.500-.6-1.500-1.400 0-.9.600-1.500 1.300-1.500z" fill="#166be0"/></svg>
<svg class="abs" style="left:1779px;top:896px;width:16px;height:20px" viewBox="0 0 16 20"><rect x="5" y="1.500" width="6" height="10.500" rx="3" fill="#166be0"/><path d="M2.300 8.800c0 3.300 2.500 5.600 5.700 5.600s5.700-2.300 5.700-5.600M8 14.400v3M5.300 17.800h5.400" fill="none" stroke="#166be0" stroke-width="1.500" stroke-linecap="round"/></svg>
<svg class="abs" style="left:1802px;top:898px;width:18px;height:16px" viewBox="0 0 18 16"><rect x="1.200" y="2.200" width="15.600" height="11.600" rx="1.800" fill="#166be0"/><g fill="#fff"><rect x="3.200" y="4.200" width="2" height="2"/><rect x="6.400" y="4.200" width="2" height="2"/><rect x="9.600" y="4.200" width="2" height="2"/><rect x="12.800" y="4.200" width="2" height="2"/><rect x="3.200" y="7.200" width="2" height="2"/><rect x="6.400" y="7.200" width="2" height="2"/><rect x="9.600" y="7.200" width="2" height="2"/><rect x="12.800" y="7.200" width="2" height="2"/><rect x="3.200" y="10.300" width="2" height="1.700"/><rect x="6.400" y="10.300" width="8.400" height="1.700"/></g></svg>
<div class="abs" style="left:1824px;top:895px;width:23px;height:24px;background:#f5f6fd"></div>
<svg class="abs" style="left:1826px;top:897px;width:18px;height:18px" viewBox="0 0 18 18"><path d="M6 1.800c.7 1.100 1.800 1.700 3 1.700s2.300-.6 3-1.700l4.800 2.300-1.500 4-2.300-.8v9.200H5V7.300l-2.300.8-1.500-4z" fill="#166be0"/></svg>
<svg class="abs" style="left:1851.500px;top:899px;width:16px;height:16px" viewBox="0 0 18 18"><path d="M5.300 2.300h7.400c2.500 0 4.300 1.900 4.500 4.300l.5 6.600c.1 1.500-.9 2.500-2.100 2.500-.9 0-1.700-.5-2.100-1.300l-.8-1.700H5.300l-.8 1.700c-.4.800-1.200 1.300-2.100 1.300-1.200 0-2.200-1-2.100-2.500l.5-6.600c.2-2.400 2-4.300 4.500-4.300z" fill="#166be0"/><g fill="#fff"><rect x="4.600" y="4.300" width="1.400" height="4.400"/><rect x="3.100" y="5.800" width="4.400" height="1.400"/><circle cx="11.800" cy="5.200" r="1.100"/><circle cx="13.700" cy="7.400" r="1.100"/><path d="M4.800 10.300h8.400v1.300H4.800z"/></g></svg>
<svg class="abs" style="left:1875px;top:898px;width:16px;height:16px" viewBox="0 0 16 16"><g fill="#166be0"><rect x="1" y="1" width="6.300" height="6.300" rx="1.700"/><rect x="8.700" y="8.700" width="6.300" height="6.300" rx="1.700"/><rect x="1" y="8.700" width="6.300" height="6.300" rx="1.700"/></g><rect x="9.500" y="1.800" width="4.700" height="4.700" rx="1.200" fill="none" stroke="#166be0" stroke-width="1.600"/></svg>
<svg class="abs" style="left:1900px;top:898.500px;width:15px;height:16px" viewBox="0 0 18 19"><path d="M9 1.200l2.300 2.300h3.300l.9 3.200 2.200 2.300-2.200 2.300-.9 3.200h-3.300L9 16.800l-2.300-2.300H3.400l-.9-3.200L.3 9l2.200-2.300.9-3.200h3.300z" fill="#166be0"/><path d="M9 5.500a3 3 0 0 1 1.500 5.600v6.500h-3v-6.500A3 3 0 0 1 9 5.500z" fill="#fff"/><circle cx="9" cy="8.500" r="1.200" fill="#166be0"/></svg>

</div>
</body>
</html>
